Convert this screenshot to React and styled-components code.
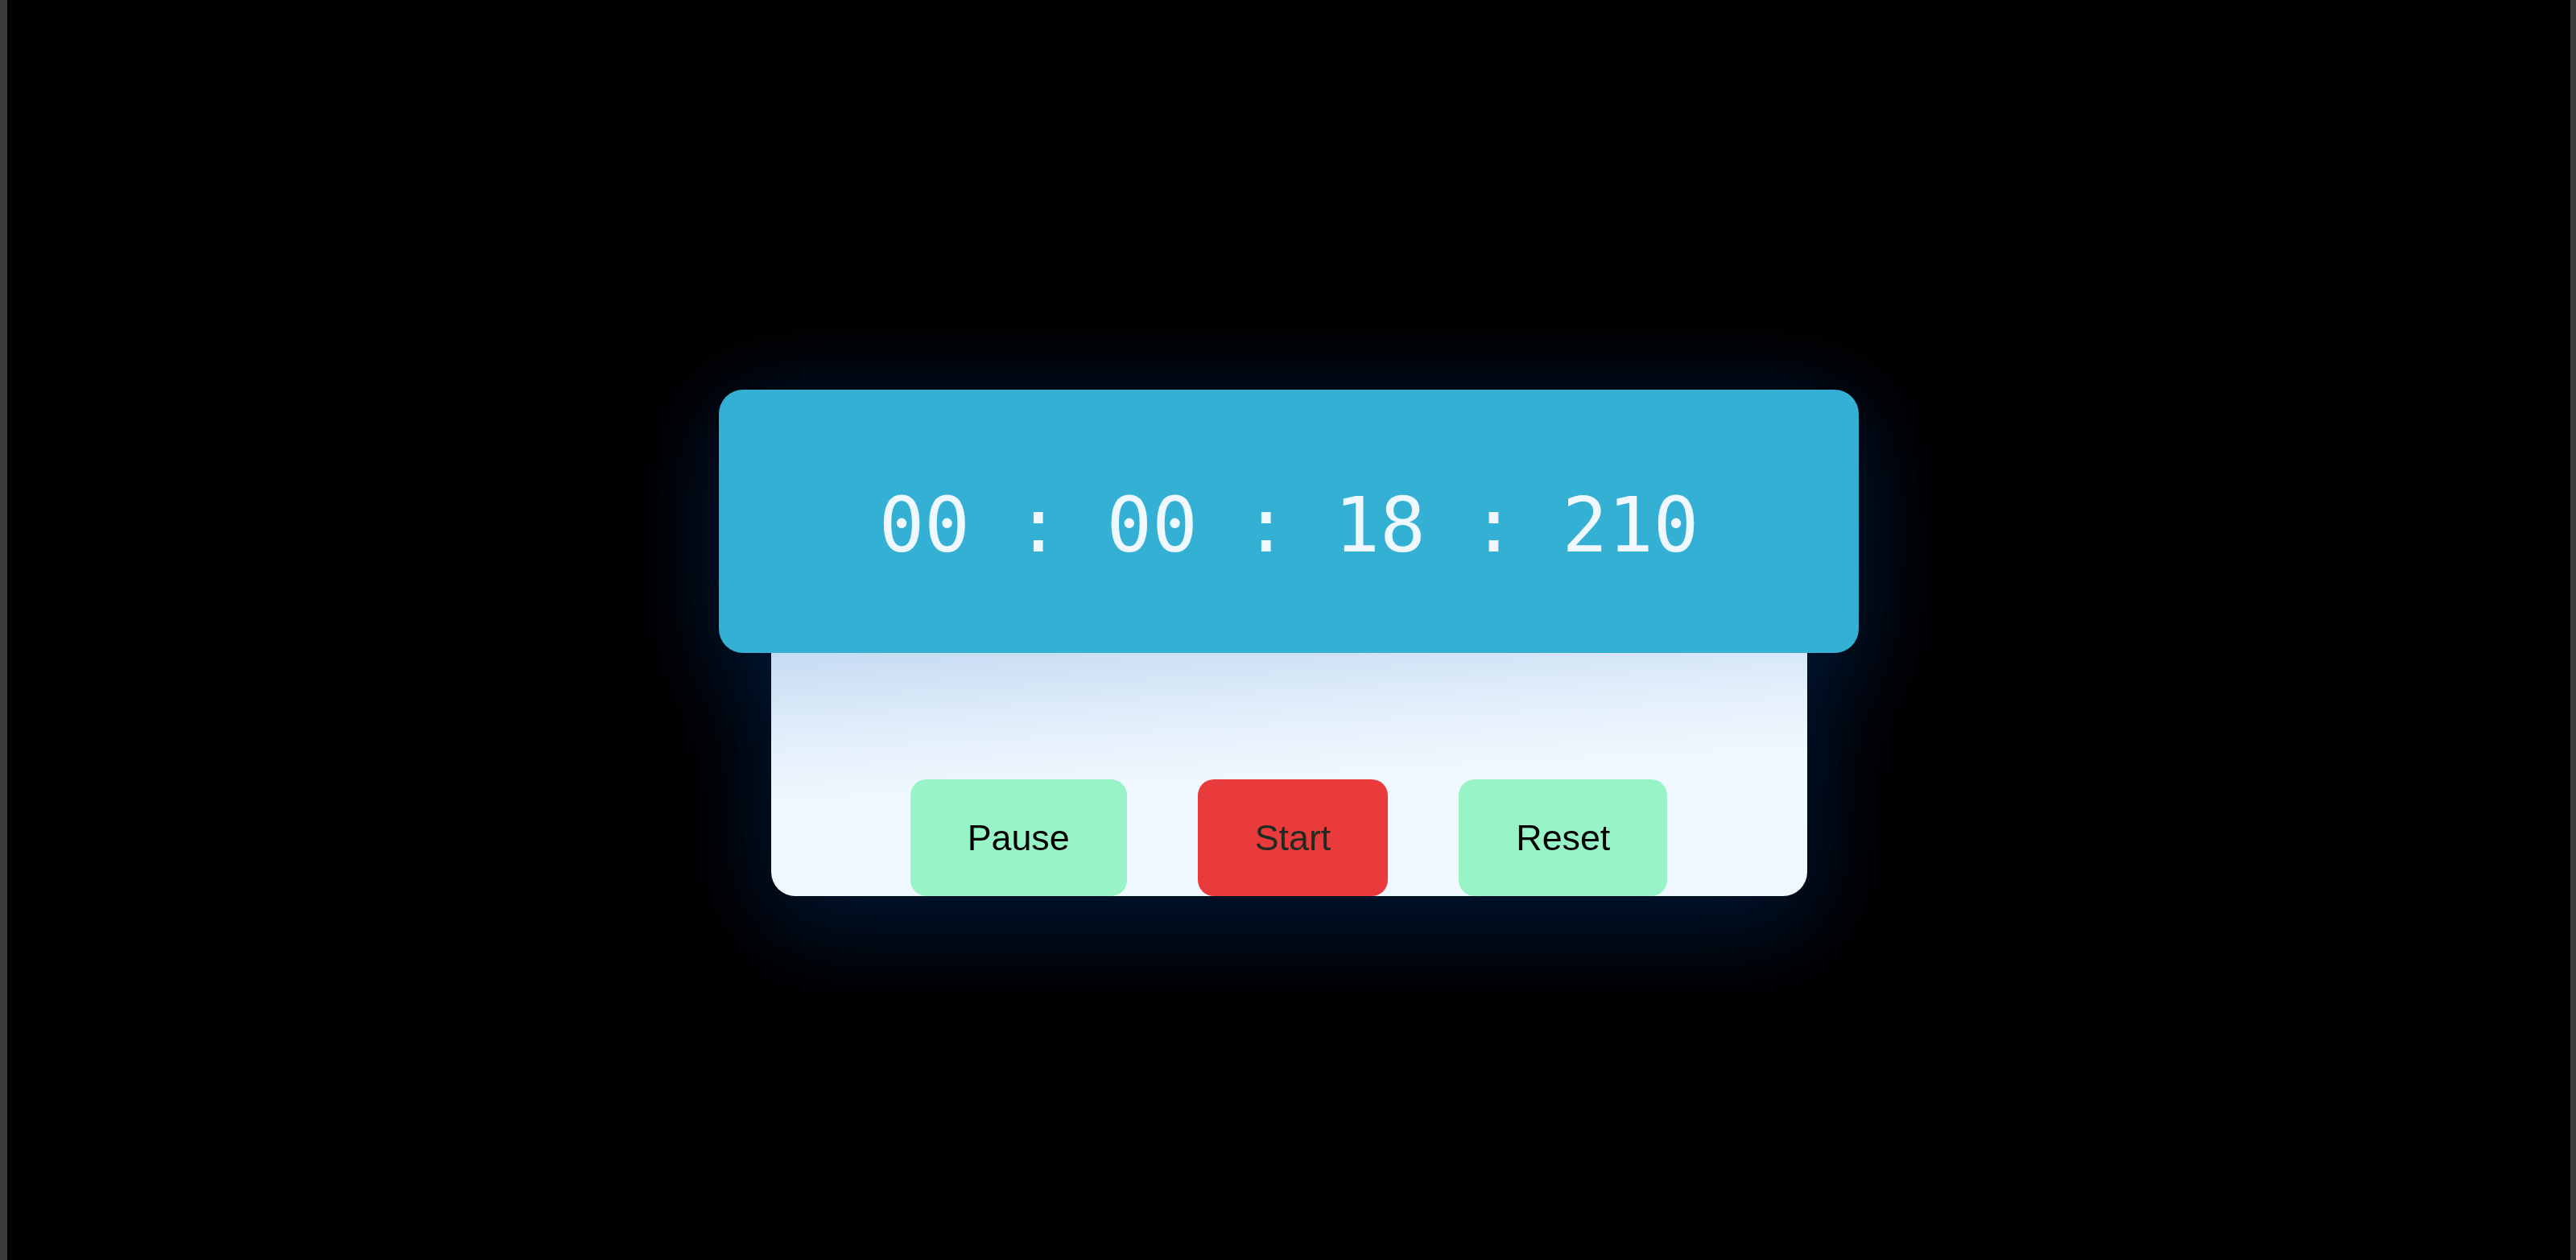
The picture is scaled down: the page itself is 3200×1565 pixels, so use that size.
import React, { useState } from "react";
import styled, { createGlobalStyle } from "styled-components";

const GlobalStyle = createGlobalStyle`
  html, body {
    margin: 0;
    padding: 0;
    background: #000;
  }

  * {
    box-sizing: border-box;
  }
`;

const Page = styled.div`
  min-height: 100vh;
  background: #000;
  border-left: 9px solid #3c3c3c;
  border-right: 7px solid #3c3c3c;
  display: flex;
  justify-content: center;
  align-items: flex-start;
  padding-top: 484px;
`;

const Stopwatch = styled.div`
  display: flex;
  flex-direction: column;
  align-items: center;
  filter: drop-shadow(0 0 60px rgba(0, 40, 95, 0.35))
    drop-shadow(0 50px 55px rgba(0, 25, 60, 0.55));
`;

const Display = styled.div`
  position: relative;
  z-index: 1;
  width: 1416px;
  height: 327px;
  border-radius: 30px;
  background: #33b0d4;
  display: flex;
  justify-content: center;
  align-items: center;
  padding-top: 10px;

  .time {
    font-family: "DejaVu Sans Mono", "Liberation Mono", monospace;
    font-size: 94px;
    color: #f0f8ff;
    white-space: pre;
  }
`;

const Controls = styled.div`
  width: 1287px;
  height: 302px;
  border-radius: 0 0 30px 30px;
  background: linear-gradient(177deg, #c6dbf2 0%, #e3effb 30%, #f0f8ff 52%);
  display: flex;
  justify-content: center;
  align-items: flex-end;
  gap: 88px;
`;

const Button = styled.button`
  border: none;
  border-radius: 20px;
  height: 145px;
  padding: 0 71px;
  font-family: "Liberation Sans", Arial, sans-serif;
  font-size: 44.8px;
  color: ${props => (props.red ? "#1f2b22" : "#000")};
  background: ${props => (props.red ? "#e93b3c" : "#98f4c6")};
  cursor: pointer;
`;

const pad = (n, len = 2) => String(n).padStart(len, "0");

export default function App() {
  const [time] = useState({ h: 0, m: 0, s: 18, ms: 210 });

  return (
    <>
      <GlobalStyle />
      <Page>
        <Stopwatch>
          <Display>
            <div className="time">
              {`${pad(time.h)} : ${pad(time.m)} : ${pad(time.s)} : ${pad(time.ms, 3)}`}
            </div>
          </Display>
          <Controls>
            <Button>Pause</Button>
            <Button red>Start</Button>
            <Button>Reset</Button>
          </Controls>
        </Stopwatch>
      </Page>
    </>
  );
}
